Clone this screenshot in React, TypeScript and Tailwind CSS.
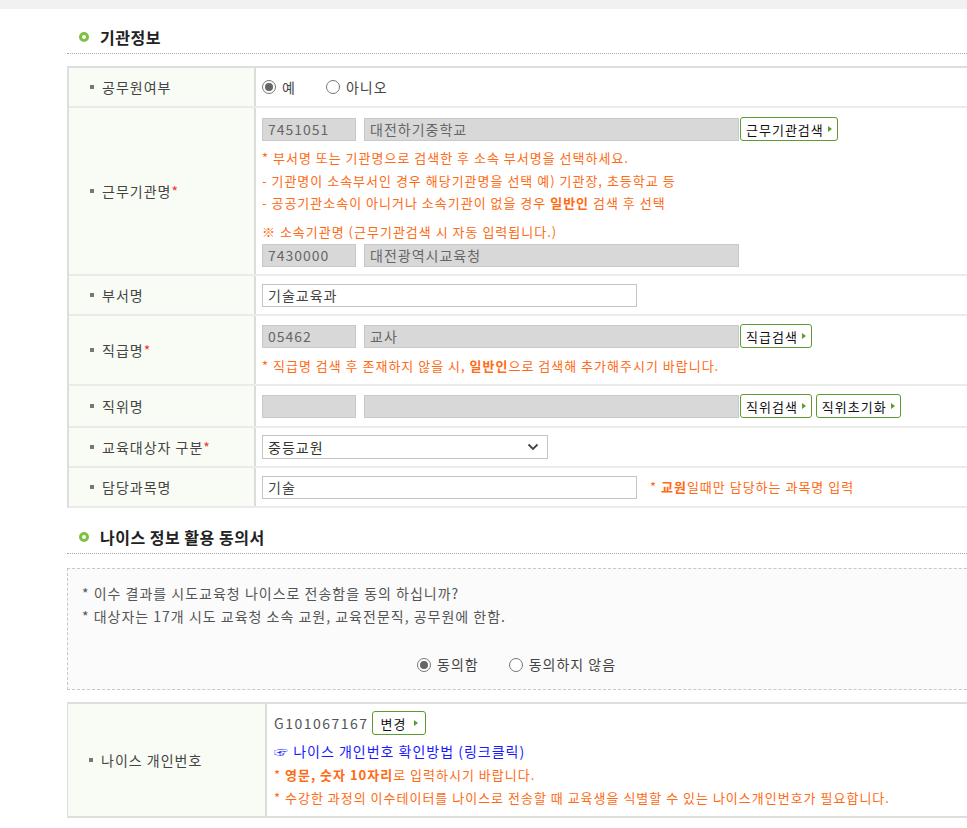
import React from "react";

const Radio = ({ checked, label, className = "" }: { checked?: boolean; label: string; className?: string }) => (
  <span className={"inline-flex items-center " + className}>
    <span className="w-[14px] h-[14px] rounded-full border border-[#777] bg-white flex items-center justify-center">
      {checked && <span className="w-[8px] h-[8px] rounded-full bg-[#666]" />}
    </span>
    <span className="ml-[6px] text-[14px] text-[#444]">{label}</span>
  </span>
);

const Btn = ({ label, wide }: { label: string; wide?: boolean }) => (
  <button
    className={
      (wide ? "pl-[8px] pr-[7px] gap-[7px] " : "pl-[5px] pr-[5px] gap-[4px] ") +
      "h-[24px] border border-[#5c9c2e] rounded-[3px] bg-white text-[13px] text-[#111] flex items-center leading-none"
    }
  >
    <span>{label}</span>
    <span className="w-0 h-0 border-y-[3px] border-y-transparent border-l-[4px] border-l-[#5c9c2e]" />
  </button>
);

const GrayInput = ({ w, value }: { w: string; value?: string }) => (
  <div className={w + " h-[23px] bg-[#d8d8d8] border border-[#c9c9c9] px-[5px] text-[14px] text-[#666] flex items-center leading-none"}>
    {value}
  </div>
);

const TextInput = ({ value }: { value: string }) => (
  <div className="w-[375px] h-[23px] bg-white border border-[#c4c4c4] px-[5px] text-[14px] text-[#444] flex items-center leading-none">
    {value}
  </div>
);

const Label = ({ text, req, w = "w-[187px]" }: { text: string; req?: boolean; w?: string }) => (
  <div className={w + " shrink-0 bg-[#f8fcf4] border-r-2 border-[#dcdcdc] flex items-center pl-[21px]"}>
    <span className="w-[4px] h-[4px] bg-[#777]" />
    <span className="ml-[8px] text-[14px] text-[#444]">{text}</span>
    {req && <span className="text-[#e33] text-[14px]">*</span>}
  </div>
);

const Row = ({ h, children }: { h: string; children: React.ReactNode }) => (
  <div className={"flex border-b-2 border-[#ebebeb] " + h}>{children}</div>
);

const Title = ({ text }: { text: string }) => (
  <div className="flex items-center h-[44px] border-b border-dotted border-[#aaa] pl-[12px] pt-[10px]">
    <span className="w-[10px] h-[10px] rounded-full border-[3px] border-[#7cc242]" />
    <span className="ml-[11px] text-[16px] font-bold text-[#222] tracking-[0.5px]">{text}</span>
  </div>
);

export default function App() {
  return (
    <div className="w-[967px] h-[828px] overflow-hidden bg-white tracking-[1px] font-['Noto_Sans_CJK_KR','Noto_Sans',sans-serif]">
      <div className="h-[9px] bg-[#f1f1f1]" />
      <div className="ml-[67px] w-[1000px]">
        <div className="pt-[1px]">
          <Title text="기관정보" />
        </div>
        <div className="mt-[12px] border-t-2 border-l-2 border-[#dedede]">
          <Row h="h-[40px]">
            <Label text="공무원여부" />
            <div className="flex items-center pl-[6px]">
              <Radio checked label="예" />
              <Radio label="아니오" className="ml-[30px]" />
            </div>
          </Row>
          <Row h="h-[168px]">
            <Label text="근무기관명" req />
            <div className="flex flex-col pl-[6px] pt-[9px]">
              <div className="flex items-center">
                <GrayInput w="w-[94px]" value="7451051" />
                <GrayInput w="w-[375px] ml-[8px]" value="대전하기중학교" />
                <div className="ml-[1px]"><Btn label="근무기관검색" /></div>
              </div>
              <div className="mt-[6px] text-[13px] leading-[22.5px] text-[#ff6a13]">
                <div>* 부서명 또는 기관명으로 검색한 후 소속 부서명을 선택하세요.</div>
                <div>- 기관명이 소속부서인 경우 해당기관명을 선택 예) 기관장, 초등학교 등</div>
                <div>- 공공기관소속이 아니거나 소속기관이 없을 경우 <b>일반인</b> 검색 후 선택</div>
              </div>
              <div className="mt-[6px] text-[13px] leading-[22px] text-[#ff6a13]">※ 소속기관명 (근무기관검색 시 자동 입력됩니다.)</div>
              <div className="flex items-center mt-[1px]">
                <GrayInput w="w-[94px]" value="7430000" />
                <GrayInput w="w-[375px] ml-[8px]" value="대전광역시교육청" />
              </div>
            </div>
          </Row>
          <Row h="h-[40px]">
            <Label text="부서명" />
            <div className="flex items-center pl-[6px]">
              <TextInput value="기술교육과" />
            </div>
          </Row>
          <Row h="h-[70px]">
            <Label text="직급명" req />
            <div className="flex flex-col pl-[6px] pt-[8px]">
              <div className="flex items-center">
                <GrayInput w="w-[94px]" value="05462" />
                <GrayInput w="w-[375px] ml-[8px]" value="교사" />
                <div className="ml-[1px]"><Btn label="직급검색" /></div>
              </div>
              <div className="mt-[8px] text-[13px] leading-[20px] text-[#ff6a13]">
                * 직급명 검색 후 존재하지 않을 시, <b>일반인</b>으로 검색해 추가해주시기 바랍니다.
              </div>
            </div>
          </Row>
          <Row h="h-[42px]">
            <Label text="직위명" />
            <div className="flex items-center pl-[6px]">
              <GrayInput w="w-[94px]" />
              <GrayInput w="w-[375px] ml-[8px]" />
              <div className="ml-[1px]"><Btn label="직위검색" /></div>
              <div className="ml-[4px]"><Btn label="직위초기화" /></div>
            </div>
          </Row>
          <Row h="h-[40px]">
            <Label text="교육대상자 구분" req />
            <div className="flex items-center pl-[6px]">
              <div className="w-[286px] h-[24px] border border-[#c4c4c4] bg-white flex items-center justify-between pl-[5px] pr-[8px] text-[14px] text-[#333]">
                <span>중등교원</span>
                <svg width="12" height="8" viewBox="0 0 12 8"><path d="M1.5 1.5 L6 6 L10.5 1.5" stroke="#444" strokeWidth="1.8" fill="none" /></svg>
              </div>
            </div>
          </Row>
          <Row h="h-[40px]">
            <Label text="담당과목명" />
            <div className="flex items-center pl-[6px]">
              <TextInput value="기술" />
              <span className="ml-[13px] text-[13px] text-[#ff6a13]">* <b>교원</b>일때만 담당하는 과목명 입력</span>
            </div>
          </Row>
        </div>

        <div className="mt-[2px]">
          <Title text="나이스 정보 활용 동의서" />
        </div>
        <div className="mt-[14px] h-[122px] border border-dashed border-[#c8c8c8] bg-[#fbfbfb] pl-[14px] pt-[13px]">
          <div className="text-[14px] leading-[23px] text-[#555]">
            <div>* 이수 결과를 시도교육청 나이스로 전송함을 동의 하십니까?</div>
            <div>* 대상자는 17개 시도 교육청 소속 교원, 교육전문직, 공무원에 한함.</div>
          </div>
          <div className="mt-[26px] flex items-center pl-[335px]">
            <Radio checked label="동의함" />
            <Radio label="동의하지 않음" className="ml-[30px]" />
          </div>
        </div>

        <div className="mt-[12px] h-[116px] flex border-t-2 border-b-2 border-l border-[#dedede]">
          <Label text="나이스 개인번호" w="w-[199px]" />
          <div className="flex flex-col pl-[7px] pt-[7px]">
            <div className="flex items-center">
              <span className="text-[14px] text-[#555] tracking-[1.5px]">G101067167</span>
              <div className="ml-[3px]"><Btn label="변경" wide /></div>
            </div>
            <div className="mt-[5px] text-[14px] leading-[23px] text-[#1a1aff]">☞ 나이스 개인번호 확인방법 (링크클릭)</div>
            <div className="text-[13px] leading-[23px] text-[#ff6a13]">* <b>영문, 숫자 10자리</b>로 입력하시기 바랍니다.</div>
            <div className="text-[13px] leading-[23px] text-[#ff6a13]">* 수강한 과정의 이수테이터를 나이스로 전송할 때 교육생을 식별할 수 있는 나이스개인번호가 필요합니다.</div>
          </div>
        </div>
      </div>
    </div>
  );
}
